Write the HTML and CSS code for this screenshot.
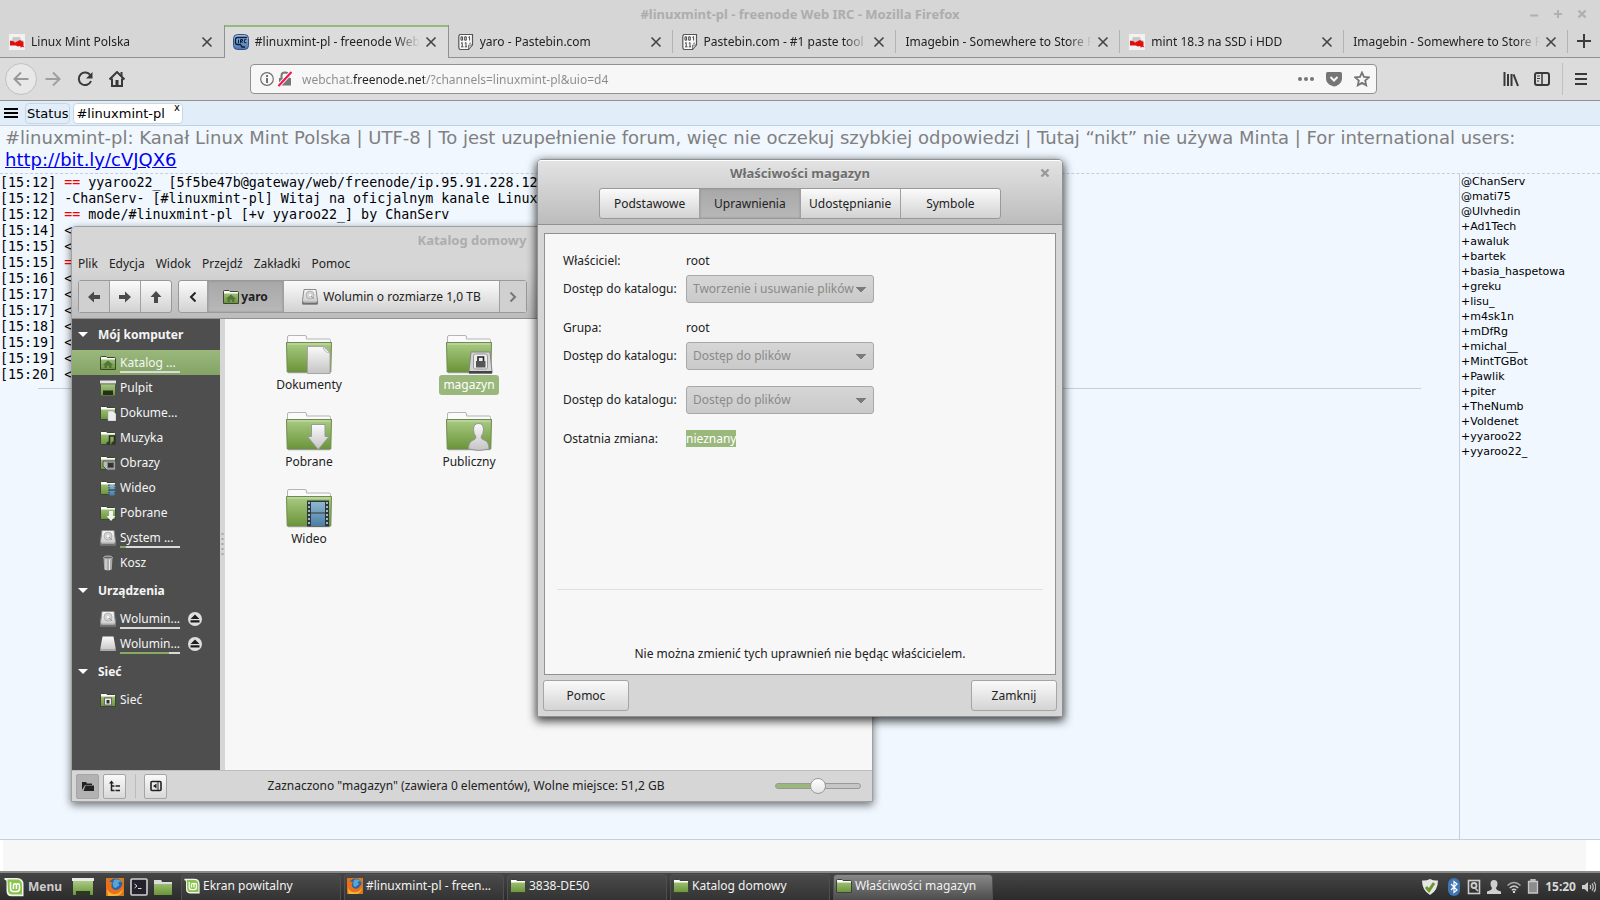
FILE: index.html
```html
<!DOCTYPE html>
<html lang="pl">
<head>
<meta charset="utf-8">
<title>#linuxmint-pl - freenode Web IRC</title>
<link rel="stylesheet" href="styles.css">
</head>
<body>
<svg class="defs" aria-hidden="true">
  <defs>
    <linearGradient id="green" x1="0" y1="0" x2="0" y2="1"><stop offset="0" stop-color="#a9cb83"/><stop offset="1" stop-color="#6b9439"/></linearGradient>
    <linearGradient id="silver" x1="0" y1="0" x2="0" y2="1"><stop offset="0" stop-color="#fafafa"/><stop offset="1" stop-color="#c4c4c4"/></linearGradient>
    <linearGradient id="film" x1="0" y1="0" x2="0" y2="1"><stop offset="0" stop-color="#8fb8cf"/><stop offset="1" stop-color="#4a7da5"/></linearGradient>
    <linearGradient id="blue" x1="0" y1="0" x2="0" y2="1"><stop offset="0" stop-color="#9cbde6"/><stop offset="1" stop-color="#4a76b4"/></linearGradient>
    <symbol id="folder" viewBox="0 0 48 40">
      <path d="M2.500 9V3q0-1.500 1.500-1.500H20q1.500 0 1.500 1.500v2H44q1.500 0 1.500 1.500V9z" fill="#fafafa" stroke="#b4b4b4"/>
      <path d="M1.500 8.500h45l-.7 29.500h-43.600z" fill="url(#green)" stroke="#6f8a50"/>
      <path d="M2.500 10h43" stroke="#c9dfb0"/><path d="M3 38.800h42" stroke="#000" opacity=".25"/>
    </symbol>
    <symbol id="sfolder" viewBox="0 0 16 16">
      <path d="M.5 14.500V2.500q0-1 1-1H6l1 1h7.500q1 0 1 1v11z" fill="url(#green)" stroke="#3d4436"/>
      <path d="M1 4.500V2.600Q1 2 1.600 2H6l1 1h7.400q.6 0 .6.600v.9z" fill="#fff"/>
    </symbol>
    <symbol id="drive" viewBox="0 0 16 16">
      <path d="M2 .5h12l1.500 11v3.500h-15v-3.500z" fill="url(#silver)" stroke="#8b8b8b"/><circle cx="8" cy="6" r="4" fill="#d2d2d2" stroke="#aaa" stroke-width=".8"/><circle cx="8" cy="6" r="1.200" fill="#f7f7f7"/><path d="M9 7l3 3" stroke="#999"/><path d="M.5 12.500h15v3H.5z" fill="#707070"/><path d="M1.500 13h13" stroke="#ddd"/>
    </symbol>
    <symbol id="x" viewBox="0 0 12 12"><path d="M1.500 1.500l9 9m0-9l-9 9" stroke="currentColor" stroke-width="1.600" fill="none"/></symbol>
    <symbol id="pl" viewBox="0 0 16 16"><rect width="16" height="16" fill="#f2f2f2"/><path d="M1 8V6h2l1-3h7l1 3h2v2z" fill="#c9c9c9"/><path d="M1 7h3l2 1.500L9 7l2-1 2 1.500h1.500V12l1 1.500-2-.8-2 1V12l-3 .5-1.500-1H1z" fill="#e20d0d"/></symbol>
    <symbol id="pastebin" viewBox="0 0 16 16"><path d="M2 .5h12.500v10L10.500 15.500H2Q.8 15 .8 13V3Q.8 1 2 .5z" fill="#fafafa" stroke="#555" stroke-width="1.200"/><path d="M10.500 15.500V11h4z" fill="#ccc" stroke="#555" stroke-width=".7"/><path d="M3 2.800h1.600v3.400H3zM6.700 2.800h1.600v3.400H6.700zM10.400 3.500l1.200-.9v3.900M3 9.400l1.200-.9v3.900M3 12.800h2.500M6.800 9.400L8 8.500v3.900M6.800 12.800h2.300M12 8.500v1.500" fill="none" stroke="#333" stroke-width=".9"/></symbol>
    <symbol id="irc" viewBox="0 0 16 16"><rect x=".5" y=".5" width="15" height="15" rx="4" fill="url(#blue)" stroke="#35527e"/><path d="M14 3.500H4.500Q2.500 3.500 2.500 5.500v3q0 2 2 2h3l1.500 2.500h3" fill="none" stroke="#0e1c33" stroke-width="1.300"/><path d="M5.500 5.500v3.500M7.500 9V5.500h2V7h-1.500l1.500 2M13.500 5.700h-2.200v3h2.200" fill="none" stroke="#0e1c33"/></symbol>
    <symbol id="mint" viewBox="0 0 20 20"><path d="M.5 1h12.500q6.500 0 6.500 6.500V19.300H7.500q-5 0-5-5.500V4.500Q2.500 2.800.5 2.800z" fill="#f1f5ea"/><path d="M3.500 2.500H12.500q5.500 0 5.500 5.500v9.500H8.500q-4.500 0-4.500-4.500z" fill="#8bc34f"/><path d="M6.500 5v6.500q0 3 3 3h3q3 0 3-3V8.500q0-1.700-1.500-1.700t-1.600 1.700v3.500M12.400 8.500q0-1.700-1.500-1.700T9.400 8.500v3.500" fill="none" stroke="#fff" stroke-width="1.500"/></symbol>
    <symbol id="firefox" viewBox="0 0 18 18"><rect width="18" height="18" fill="#d87a1c"/><circle cx="9.500" cy="8" r="7.500" fill="#2b62a8"/><path d="M8 2q4-2 8 2-3-1-4 1 2 1 1 3-2 0-3 2-3 0-3-3 0-3 1-5z" fill="#55a6d6"/><path d="M0 3l2-2q0 2 1 3 2-.5 4 1-2 1-1.500 2.500Q5 9.500 7 11q3 2 6 0 3-2 4-7 2 9-4 13H4q-4-3-4-8z" fill="#e8701a"/><path d="M1 11q3 6 9 5 5-1 7-6-1 8-8 8H2z" fill="#f6b53a"/></symbol>
    <symbol id="eject" viewBox="0 0 16 16"><circle cx="8" cy="8" r="7" fill="#dedede"/><path d="M8 3.500L12.500 8h-9zM3.500 9.300h9V11.500h-9z" fill="#1c1c1c"/></symbol>
    <symbol id="home" viewBox="0 0 16 16"><path d="M8 5.500L2.800 10h1.700v3h2.500v-2.200h2V13h2.500v-3h1.700z" fill="#53743a"/></symbol>
  </defs>
</svg>

<main class="browser">
  <header class="titlebar">
    <h1>#linuxmint-pl - freenode Web IRC - Mozilla Firefox</h1>
    <div class="wm">
      <button aria-label="Minimalizuj"><svg width="10" height="10"><path d="M1 6.500h8" stroke="#b0b0b0" stroke-width="2"/></svg></button>
      <button aria-label="Maksymalizuj"><svg width="10" height="10"><path d="M1 5h8M5 1v8" stroke="#b0b0b0" stroke-width="2"/></svg></button>
      <button aria-label="Zamknij okno"><svg width="10" height="10"><path d="M1.500 1.500l7 7m0-7l-7 7" stroke="#b0b0b0" stroke-width="2.400"/></svg></button>
    </div>
  </header>
  <nav class="tabs">
    <div class="tab"><svg class="i16"><use href="#pl"/></svg><button class="name">Linux Mint Polska</button><button class="close" aria-label="Zamknij kartę"><svg><use href="#x"/></svg></button></div>
    <div class="tab active"><svg class="i16"><use href="#irc"/></svg><button class="name">#linuxmint-pl - freenode Web</button><button class="close" aria-label="Zamknij kartę"><svg><use href="#x"/></svg></button></div>
    <div class="tab"><svg class="i16"><use href="#pastebin"/></svg><button class="name">yaro - Pastebin.com</button><button class="close" aria-label="Zamknij kartę"><svg><use href="#x"/></svg></button></div>
    <div class="tab"><svg class="i16"><use href="#pastebin"/></svg><button class="name">Pastebin.com - #1 paste tool s</button><button class="close" aria-label="Zamknij kartę"><svg><use href="#x"/></svg></button></div>
    <div class="tab"><button class="name">Imagebin - Somewhere to Store R</button><button class="close" aria-label="Zamknij kartę"><svg><use href="#x"/></svg></button></div>
    <div class="tab"><svg class="i16"><use href="#pl"/></svg><button class="name">mint 18.3 na SSD i HDD</button><button class="close" aria-label="Zamknij kartę"><svg><use href="#x"/></svg></button></div>
    <div class="tab"><button class="name">Imagebin - Somewhere to Store R</button><button class="close" aria-label="Zamknij kartę"><svg><use href="#x"/></svg></button></div>
    <button class="newtab" aria-label="Nowa karta"><svg width="14" height="14"><path d="M0 7h14M7 0v14" stroke="#3b3b3b" stroke-width="2"/></svg></button>
  </nav>
  <div class="navbar">
    <div class="navleft">
      <button class="back" aria-label="Wstecz"><svg width="16" height="16"><path d="M15.500 8H1.500M8 1.500L1.500 8 8 14.500" fill="none" stroke="#999" stroke-width="2"/></svg></button>
      <button aria-label="Dalej"><svg width="16" height="16"><path d="M.5 8h14M8 1.500L14.500 8 8 14.500" fill="none" stroke="#9f9f9f" stroke-width="2"/></svg></button>
      <button aria-label="Odśwież"><svg width="16" height="16"><path d="M13.500 4.500A6.300 6.300 0 1 0 14 10" fill="none" stroke="#393939" stroke-width="2"/><path d="M15.500 1v6.500H9z" fill="#393939"/></svg></button>
      <button aria-label="Strona startowa"><svg width="16" height="16"><path d="M.5 8.500L8 1l7.500 7.500M3 7.500V15h10V7.500" fill="none" stroke="#393939" stroke-width="2"/><path d="M6.500 15V9h3v6M11.500 1h2v4h-2z" fill="#393939"/></svg></button>
    </div>
    <div class="urlbar">
      <svg width="14" height="14"><circle cx="7" cy="7" r="6.300" fill="none" stroke="#6f6f6f" stroke-width="1.200"/><path d="M7 6v5M7 3v2" stroke="#6f6f6f" stroke-width="2"/></svg>
      <svg width="14" height="16"><path d="M1 7h12v7.500H1z" fill="#777"/><path d="M3.500 7V4.500q0-3 3.500-3t3.500 3V7" fill="none" stroke="#777" stroke-width="2"/><path d="M0 15.500L13.500 1" stroke="#f7f7f7" stroke-width="4"/><path d="M.5 15L13.500 1" stroke="#f0134d" stroke-width="2"/></svg>
      <input type="text" aria-label="Adres" value="webchat.freenode.net/?channels=linuxmint-pl&amp;uio=d4">
      <button aria-label="Więcej"><svg width="16" height="16"><g fill="#757575"><circle cx="2" cy="8" r="2"/><circle cx="8" cy="8" r="2"/><circle cx="14" cy="8" r="2"/></g></svg></button>
      <button aria-label="Pocket"><svg width="16" height="16"><path d="M1.500 1h13q1.500 0 1.500 1.500V7q0 4-3 6.300T8 15.500 3 13.300 0 7V2.500Q0 1 1.500 1z" fill="#757575"/><path d="M4.500 6L8 9.500 11.500 6" fill="none" stroke="#f7f7f7" stroke-width="2"/></svg></button>
      <button aria-label="Dodaj zakładkę"><svg width="16" height="16"><path d="M8 1.500l2 4.400 4.800.5-3.600 3.200 1 4.700L8 11.900l-4.200 2.400 1-4.700L1.200 6.400 6 5.900z" fill="none" stroke="#757575" stroke-width="1.800"/></svg></button>
    </div>
    <div class="navright">
      <button aria-label="Biblioteka"><svg width="16" height="16"><path d="M1.500 1v14M5 3v12M8.500 3v12M10.500 3.300L15 15" stroke="#393939" stroke-width="2"/></svg></button>
      <button aria-label="Panel boczny"><svg width="16" height="16"><rect x="1" y="2" width="14" height="12" rx="2" fill="none" stroke="#393939" stroke-width="2"/><path d="M8 2v12" stroke="#393939" stroke-width="1.500"/><path d="M3 5h3M3 7.500h3M3 10h2" stroke="#393939"/></svg></button>
      <span class="navsep"></span>
      <button aria-label="Menu przeglądarki"><svg width="12" height="14"><path d="M0 2h12M0 7h12M0 12h12" stroke="#393939" stroke-width="2"/></svg></button>
    </div>
  </div>
  <div class="irctabs">
    <button aria-label="Menu czatu"><svg width="14" height="10"><path d="M0 1h14M0 5h14M0 9h14" stroke="#000" stroke-width="2"/></svg></button>
    <button class="irctab">Status</button>
    <button class="irctab current">#linuxmint-pl<sup>x</sup></button>
  </div>
  <p class="topic">#linuxmint-pl: Kanał Linux Mint Polska | UTF-8 | To jest uzupełnienie forum, więc nie oczekuj szybkiej odpowiedzi | Tutaj “nikt” nie używa Minta | For international users: <a href="#">http://bit.ly/cVJQX6</a></p>
  <div class="chat">
    <div class="log">
      <p>[15:12] <b>==</b> yyaroo22_ [5f5be47b@gateway/web/freenode/ip.95.91.228.12</p>
      <p>[15:12] -ChanServ- [#linuxmint-pl] Witaj na oficjalnym kanale Linux</p>
      <p>[15:12] <b>==</b> mode/#linuxmint-pl [+v yyaroo22_] by ChanServ</p>
      <p>[15:14] &lt;</p>
      <p>[15:15] &lt;</p>
      <p>[15:15] <b>=</b></p>
      <p>[15:16] &lt;</p>
      <p>[15:17] &lt;</p>
      <p>[15:17] &lt;</p>
      <p>[15:18] &lt;</p>
      <p>[15:19] &lt;</p>
      <p>[15:19] &lt;</p>
      <p>[15:20] &lt;</p>
      <hr>
    </div>
    <ul class="users">
      <li>@ChanServ</li><li>@mati75</li><li>@Ulvhedin</li><li>+Ad1Tech</li><li>+awaluk</li><li>+bartek</li><li>+basia_haspetowa</li><li>+greku</li><li>+lisu_</li><li>+m4sk1n</li><li>+mDfRg</li><li>+michal__</li><li>+MintTGBot</li><li>+Pawlik</li><li>+piter</li><li>+TheNumb</li><li>+Voldenet</li><li>+yyaroo22</li><li>+yyaroo22_</li>
    </ul>
  </div>
  <div class="compose"><input type="text" aria-label="Wiadomość"></div>
</main>

<section class="window files" aria-label="Katalog domowy">
  <header class="fhead">
    <h2>Katalog domowy</h2>
    <nav class="menu"><button>Plik</button><button>Edycja</button><button>Widok</button><button>Przejdź</button><button>Zakładki</button><button>Pomoc</button></nav>
    <div class="toolbar">
      <div class="group arrows">
        <button class="off" aria-label="Wstecz"><svg width="12" height="12"><path d="M0 6l6-5.500V4h6v4H6v3.500z" fill="#4a4a4a"/></svg></button>
        <button aria-label="Dalej"><svg width="12" height="12"><path d="M12 6L6 .5V4H0v4h6v3.500z" fill="#4a4a4a"/></svg></button>
        <button aria-label="W górę"><svg width="12" height="12"><path d="M6 0L.5 6H4v6h4V6h3.500z" fill="#4a4a4a"/></svg></button>
      </div>
      <div class="group path">
        <button class="edge" aria-label="Poprzednie"><svg width="8" height="10"><path d="M6.500.5L2 5l4.500 4.500" fill="none" stroke="#222" stroke-width="2"/></svg></button>
        <button class="on"><svg class="i16"><use href="#sfolder"/><use href="#home"/></svg>yaro</button>
        <button class="vol"><svg class="i16"><use href="#drive"/></svg>Wolumin o rozmiarze 1,0 TB</button>
        <button class="edge off" aria-label="Następne"><svg width="8" height="10"><path d="M1.500.5L6 5 1.500 9.500" fill="none" stroke="#777" stroke-width="2"/></svg></button>
      </div>
    </div>
  </header>
  <div class="fbody">
    <aside class="side">
      <h3>Mój komputer</h3>
      <a class="sel" href="#"><svg class="i16"><use href="#sfolder"/><use href="#home"/></svg><span>Katalog ...<i></i></span></a>
      <a href="#"><svg class="i16"><path d="M1 3.500h14v12H1z" fill="url(#green)"/><path d="M0 .5h16v3H0z" fill="#e4e4e4"/><path d="M0 4h16" stroke="#777"/><path d="M3 10.500h10v4.500H3z" fill="#263018"/></svg><span>Pulpit</span></a>
      <a href="#"><svg class="i16"><use href="#sfolder"/><path d="M8 6h5l3 3v7H8z" fill="#eee" stroke="#aaa" stroke-width=".6"/></svg><span>Dokume...</span></a>
      <a href="#"><svg class="i16"><use href="#sfolder"/><path d="M9.500 13V6h5v7" fill="none" stroke="#2b2b2b" stroke-width="1.600"/><circle cx="8.300" cy="13.300" r="1.800" fill="#333"/><circle cx="13.300" cy="13.300" r="1.800" fill="#333"/></svg><span>Muzyka</span></a>
      <a href="#"><svg class="i16"><use href="#sfolder"/><path d="M3 6h12.500v9H7L3 11z" fill="#bbb" stroke="#555"/><rect x="7.500" y="7.500" width="6.500" height="5.500" fill="#333" stroke="#888"/></svg><span>Obrazy</span></a>
      <a href="#"><svg class="i16"><use href="#sfolder"/><path d="M8.500 4.500h7v11h-7z" fill="url(#film)"/><path d="M9 4.500v11M15 4.500v11" stroke="#29333b" stroke-dasharray="1.500 1"/><path d="M9 10h6" stroke="#29333b"/></svg><span>Wideo</span></a>
      <a href="#"><svg class="i16"><use href="#sfolder"/><path d="M9 6h4v5h2.500L11 16l-4.500-5H9z" fill="#f2f2f2"/></svg><span>Pobrane</span></a>
      <a href="#"><svg class="i16"><use href="#drive"/></svg><span>System ...<i class="u10"></i></span></a>
      <a href="#"><svg class="i16"><path d="M3.500 2.500h9l-.7 12q-3.800 2-7.600 0z" fill="#aaa"/><path d="M6 4v11M9.500 4v11" stroke="#e8e8e8"/><ellipse cx="8" cy="2.500" rx="4.500" ry="1.500" fill="#666" stroke="#bbb"/></svg><span>Kosz</span></a>
      <h3>Urządzenia</h3>
      <a href="#"><svg class="i16"><use href="#drive"/></svg><span>Wolumin...<i></i></span><svg class="i16 ej"><use href="#eject"/></svg></a>
      <a href="#"><svg class="i16"><path d="M2.500.5h11l2 11v3.500H.5v-3.500z" fill="url(#silver)"/><path d="M.5 14h15" stroke="#aaa" stroke-width="2"/></svg><span>Wolumin...<i class="u80"></i></span><svg class="i16 ej"><use href="#eject"/></svg></a>
      <h3>Sieć</h3>
      <a href="#"><svg class="i16"><use href="#sfolder"/><rect x="4.500" y="6" width="7" height="7" fill="#eee" stroke="#666"/><path d="M6.500 8h3v3.500h-3z" fill="#333"/></svg><span>Sieć</span></a>
    </aside>
    <div class="grip"><svg width="3" height="26"><path d="M1.500 1v25" stroke="#a6a6a6" stroke-width="2" stroke-dasharray="2 3"/></svg></div>
    <div class="icons">
      <figure><svg viewBox="0 0 48 40"><use href="#folder"/><path d="M22.500 12.500h16.500l6 6V39.500H22.500z" fill="url(#silver)" stroke="#a5a5a5"/><path d="M38 12.500q1 6 7 6.500z" fill="#fff" stroke="#b5b5b5"/></svg><figcaption>Dokumenty</figcaption></figure>
      <figure class="picked"><svg viewBox="0 0 48 40"><use href="#folder"/><path d="M26 18h19l2 19v2H24v-2z" fill="#d4d4d4" stroke="#858585"/><path d="M24 37h23v2.500H24z" fill="#444"/><rect x="28.500" y="20" width="14" height="15" rx="2" fill="#eee" stroke="#999"/><path d="M31 27h9.500v6.500H31z" fill="#555"/><path d="M33 27v-4h5.500v4" fill="none" stroke="#222" stroke-width="1.600"/></svg><figcaption>magazyn</figcaption></figure>
      <figure><svg viewBox="0 0 48 40"><use href="#folder"/><path d="M26.500 13.500h13.500v12h4L33.200 38.500 22.500 25.500h4z" fill="url(#silver)" stroke="#999"/></svg><figcaption>Pobrane</figcaption></figure>
      <figure><svg viewBox="0 0 48 40"><use href="#folder"/><path d="M33.500 12.500q5 0 5 6 0 4-2.500 7.500 0 2 3 3 5 1.500 5 9-10 3-20.500 0 0-7.500 5-9 2.500-1 2.500-3-2.500-3.500-2.500-7.500 0-6 5-6z" fill="url(#silver)" stroke="#969696"/></svg><figcaption>Publiczny</figcaption></figure>
      <figure><svg viewBox="0 0 48 40"><use href="#folder"/><path d="M22 12.500h22v26H22z" fill="#30363b"/><path d="M26 14h14v24H26z" fill="url(#film)"/><path d="M26 25h14" stroke="#30363b"/><path d="M24 14v24M42 14v24" stroke="#9dbccb" stroke-width="2" stroke-dasharray="2 2"/></svg><figcaption>Wideo</figcaption></figure>
    </div>
  </div>
  <footer class="ffoot">
    <button class="on" aria-label="Miejsca"><svg width="12" height="12"><path d="M0 10V2h4l1 1.500h5V5H3z" fill="#222"/><path d="M3.500 5.500H12V11H1.500z" fill="#222"/></svg></button>
    <button aria-label="Drzewo"><svg width="12" height="12"><path d="M2.500 2v8.500h3M2.500 6h3M6.500 6H11M6.500 10.500H11" fill="none" stroke="#222" stroke-width="1.500"/><path d="M0 3.500L2.500.5 5 3.500z" fill="#222"/></svg></button>
    <span class="fsep"></span>
    <button aria-label="Ukryj panel"><svg width="12" height="12"><rect x="1" y="1.500" width="10" height="9" rx="1" fill="none" stroke="#222" stroke-width="1.600"/><path d="M6.500 3.500v5L3 6z" fill="#222"/><path d="M8 2v8" stroke="#222"/></svg></button>
    <p>Zaznaczono "magazyn" (zawiera 0 elementów), Wolne miejsce: 51,2 GB</p>
    <input type="range" aria-label="Powiększenie" min="0" max="100" value="50">
  </footer>
</section>

<section class="window dialog" aria-label="Właściwości magazyn">
  <header class="dhead">
    <div class="dtitle"><h2>Właściwości magazyn</h2><button class="dx" aria-label="Zamknij okno"><svg width="10" height="10"><path d="M1.500 1.500l7 7m0-7l-7 7" stroke="#999" stroke-width="2.400"/></svg></button></div>
    <div class="group dtabs"><button>Podstawowe</button><button class="on">Uprawnienia</button><button>Udostępnianie</button><button>Symbole</button></div>
  </header>
  <div class="pane">
    <div class="form">
      <span>Właściciel:</span><span>root</span>
      <label for="s1">Dostęp do katalogu:</label><select id="s1" disabled><option>Tworzenie i usuwanie plików</option></select>
      <span class="g">Grupa:</span><span class="g">root</span>
      <label for="s2">Dostęp do katalogu:</label><select id="s2" disabled><option>Dostęp do plików</option></select>
      <label class="h" for="s3">Dostęp do katalogu:</label><select class="h" id="s3" disabled><option>Dostęp do plików</option></select>
      <span class="g">Ostatnia zmiana:</span><span class="g"><mark>nieznany</mark></span>
    </div>
    <p class="note">Nie można zmienić tych uprawnień nie będąc właścicielem.</p>
  </div>
  <footer class="dfoot"><button>Pomoc</button><button>Zamknij</button></footer>
</section>

<footer class="taskbar">
  <button class="mintmenu"><svg width="20" height="20"><use href="#mint"/></svg>Menu</button>
  <button class="desk" aria-label="Pokaż pulpit"><svg width="22" height="20" viewBox="0 0 22 20"><path d="M1 4h20v14H1z" fill="url(#green)"/><path d="M0 1h22v3H0z" fill="#e9e9e9"/><path d="M4 14h14v4H4z" fill="#2c3820"/></svg></button>
  <button class="quick" aria-label="Firefox"><svg width="18" height="18"><use href="#firefox"/></svg></button>
  <button class="quick" aria-label="Terminal"><svg width="18" height="18"><rect x="1" y="1" width="16" height="16" rx="1" fill="#25212b" stroke="#cfcfcf" stroke-width="1.600"/><path d="M4.500 6l2.500 2-2.500 2M8 10.500h3.500" fill="none" stroke="#ddd"/></svg></button>
  <button class="quick" aria-label="Pliki"><svg width="18" height="18"><path d="M0 17V2h7l1 2h10v13z" fill="url(#green)"/><path d="M0 6V2h7l1 2h10v2z" fill="#dcdcdc"/></svg></button>
  <nav class="tasks">
    <button><svg class="i16"><use href="#mint"/></svg>Ekran powitalny</button>
    <button><svg class="i16"><use href="#firefox"/></svg>#linuxmint-pl - freen...</button>
    <button><svg class="i16"><use href="#sfolder"/></svg>3838-DE50</button>
    <button><svg class="i16"><use href="#sfolder"/></svg>Katalog domowy</button>
    <button class="on"><svg class="i16"><use href="#sfolder"/></svg>Właściwości magazyn</button>
  </nav>
  <div class="tray">
    <svg class="shield" width="16" height="16"><path d="M8 0q4 2 8 1.500 0 10-8 14.500Q0 11.500 0 1.500 4 2 8 0z" fill="#e6e6e6"/><path d="M4 8l3 3.500L12 4" fill="none" stroke="#6a9a2c" stroke-width="3"/></svg>
    <svg width="14" height="18"><rect x="1" y="0" width="12" height="18" rx="6" fill="#3f74b5"/><path d="M4 6l6 6-3 2.500v-11L10 6l-6 6" fill="none" stroke="#fff" stroke-width="1.200"/></svg>
    <svg width="14" height="16"><rect x="1.500" y="1.500" width="11" height="13" fill="none" stroke="#ccc" stroke-width="1.600"/><circle cx="7" cy="6.500" r="2.500" fill="none" stroke="#ccc" stroke-width="1.800"/><path d="M7 8l4 4" stroke="#ccc" stroke-width="1.600"/></svg>
    <svg width="14" height="14"><path d="M7 0q3.500 0 3.500 4 0 2.500-1.500 4 0 2 5 3.500V14H0v-2.500Q5 10 5 8 3.500 6.500 3.500 4 3.500 0 7 0z" fill="#d0d0d0"/></svg>
    <svg width="14" height="12"><path d="M.5 4.500q6.500-6 13 0" fill="none" stroke="#aaa" stroke-width="1.500"/><path d="M2.800 7q4.200-4 8.400 0M4.800 9.300q2.200-2 4.400 0" fill="none" stroke="#ccc" stroke-width="1.500"/><circle cx="7" cy="11" r="1.200" fill="#ddd"/></svg>
    <svg width="12" height="15"><path d="M4 0h4v2H4zM1.500 2.500h9V14h-9z" fill="#8c8c8c" stroke="#c8c8c8" stroke-width="1.300"/></svg>
    <time>15:20</time>
    <svg width="14" height="14"><path d="M0 5h2.500L6 2v10L2.500 9H0z" fill="#ccc"/><path d="M8 5q1.300 2 0 4M10 3.500q2.500 3.500 0 7M12 2q3.500 5 0 10" fill="none" stroke="#bbb" stroke-width="1.300"/></svg>
  </div>
</footer>
</body>
</html>
```
FILE: styles.css
```css
* { box-sizing: border-box; margin: 0; padding: 0; }
html, body { height: 100%; }
body {
  display: flex;
  flex-direction: column;
  overflow: hidden;
  background: #d6d6d6;
  color: #222;
  font: 12px/16px "Noto Sans", sans-serif;
}
button { font: inherit; color: inherit; background: none; border: 0; display: flex; align-items: center; justify-content: center; white-space: nowrap; }
svg { flex: none; display: block; }
.defs { position: absolute; width: 0; height: 0; }
.i16 { width: 16px; height: 16px; }

/* Browser chrome */
.browser { flex: 1; min-height: 0; display: flex; flex-direction: column; }
.titlebar { display: grid; grid-template-columns: 1fr auto 1fr; align-items: center; height: 25px; padding-top: 2px; }
.titlebar h1 { grid-column: 2; font-size: 13px; color: #adadad; }
.wm { display: flex; justify-content: flex-end; gap: 14px; padding-right: 13px; }
.tabs { display: flex; height: 33px; border-bottom: 1px solid #919191; }
.tab { flex: 1; min-width: 0; display: flex; align-items: center; padding: 1px 11px 0 9px; position: relative; }
.tab::after { content: ""; position: absolute; right: 0; top: 5px; bottom: 4px; width: 1px; background: #b3b3b3; }
.tab:first-child::after, .tab.active::after { display: none; }
.tab .name { flex: 1; min-width: 0; margin-left: 6px; justify-content: flex-start; -webkit-mask-image: linear-gradient(90deg, #000 calc(100% - 24px), transparent); mask-image: linear-gradient(90deg, #000 calc(100% - 24px), transparent); }
.tab .name:first-child { margin-left: 0; }
.tab .close { color: #444; margin-left: 5px; }
.tab .close svg { width: 12px; height: 12px; }
.tab.active { background: #dcdcdc; border: solid #919191; border-width: 0 1px; padding-left: 8px; box-shadow: inset 0 2px #9ab87c; margin-bottom: -1px; }
.newtab { width: 32px; }
.navbar { display: flex; align-items: center; height: 43px; background: #dcdcdc; border-bottom: 1px solid #919191; }
.navleft { display: flex; align-items: center; gap: 16px; width: 250px; padding-left: 5px; }
.back { width: 32px; height: 32px; border: 1px solid #c0c0c0; border-radius: 50%; background: #e8e8e8; margin-right: -8px; }
.urlbar { flex: 1; display: flex; align-items: center; gap: 4px; height: 30px; padding: 0 2px 0 9px; background: #f7f7f7; border: 1px solid #919191; border-radius: 4px; }
.urlbar input {
  flex: 1;
  min-width: 0;
  height: 20px;
  margin-left: 6px;
  border: 0;
  outline: 0;
  font: inherit;
  color: transparent;
  background: linear-gradient(90deg, #8a8a8a 50px, #222 50px, #222 122px, #8a8a8a 122px);
  -webkit-background-clip: text;
  background-clip: text;
}
.urlbar button { width: 24px; }
.navright { display: flex; align-items: center; justify-content: flex-end; gap: 16px; width: 223px; padding-right: 13px; }
.navright button:first-child { margin-right: -1px; }
.navsep { width: 1px; height: 32px; background: #c0c0c0; margin: 0 -4px; }

/* Web chat */
.irctabs { display: flex; align-items: center; gap: 3px; height: 25px; padding-left: 4px; background: #e1eefa; border-bottom: 1px solid #c0d0e0; }
.irctabs button:first-child { margin-right: 4px; }
.irctab { height: 21px; padding: 0 1px; border: 1px solid #c8d6e4; border-radius: 4px; color: #000; font: 13px/19px "DejaVu Sans", sans-serif; }
.irctab.current { background: #fff; padding: 0 2px; }
.irctab sup { font-size: 10px; line-height: 8px; align-self: flex-start; margin-left: 9px; }
.topic { background: #f0f7ff; color: #808080; font: 18px/22px "DejaVu Sans", sans-serif; padding: 1px 5px 2px; border-bottom: 1px dashed #c3cfde; }
.topic a { color: #00e; }
.chat { flex: 1; min-height: 0; display: flex; background: #f0f7ff; }
.log { flex: 1; padding: 1px 0; color: #000; font: 10pt/16px "DejaVu Sans Mono", monospace; }
.log p { white-space: pre; }
.log b { color: #f00; font-weight: 400; }
.log hr { border: 0; border-top: 1px solid #c3cfde; margin: 5px 38px 0; }
.users { width: 141px; border-left: 1px solid #c3cfde; padding-left: 1px; list-style: none; color: #000; font: 11px/15px "DejaVu Sans", sans-serif; }
.compose { height: 32px; padding: 0 14px 0 3px; background: #fff; border-top: 1px solid #c3cfde; }
.compose input { width: 100%; height: 100%; border: 0; background: #f7f7f7; outline: 0; display: block; }

/* Windows */
.window { position: absolute; display: flex; flex-direction: column; background: #d6d6d6; border: 1px solid #919191; border-radius: 5px 5px 0 0; }
.group { display: flex; border: 1px solid #999; border-radius: 3px; background: linear-gradient(#fbfbfb, #d2d2d2); }
.group button + button { border-left: 1px solid #a0a0a0; }
.group .on { background: linear-gradient(#a8a8a8, #b8b8b8); box-shadow: inset 0 0 2px #888; }
.group .off { background: #d0d0d0; }
.files { left: 71px; top: 226px; width: 802px; height: 576px; box-shadow: 0 3px 9px rgba(0, 0, 0, .55); border-color: #a0a0a0; }
.files h2 { font-size: 13px; line-height: 26px; text-align: center; color: #adadad; }
.fhead { height: 92px; background: linear-gradient(#d6d6d6 45%, #bcbcbc); border-bottom: 1px solid #919191; border-radius: 4px 4px 0 0; }
.menu { display: flex; gap: 11px; padding: 2px 6px 0; height: 27px; line-height: 17px; }
.menu button { height: 17px; }
.toolbar { display: flex; gap: 6px; padding-left: 6px; }
.toolbar .group { height: 33px; }
.arrows button { width: 31px; }
.arrows button:first-child { width: 30px; }
.edge { width: 28px; }
.path .on { width: 76px; gap: 2px; font-weight: 700; }
.vol { width: 216px; gap: 5px; }
.path .edge.off { width: 27px; }
.fbody { flex: 1; min-height: 0; display: flex; }
.side { width: 148px; background: #4e4e4e; color: #f5f5f5; }
.side h3 { display: flex; align-items: center; height: 31px; font-size: 12px; padding-left: 26px; position: relative; }
.side h3::before { content: ""; position: absolute; left: 6px; top: 13px; border: 5px solid transparent; border-top-color: #fff; border-bottom: 0; }
.side a { display: flex; align-items: center; gap: 4px; height: 25px; padding-left: 28px; color: inherit; text-decoration: none; }
.side .sel { background: linear-gradient(#9ab87c, #84a466); }
.side span { position: relative; }
.side span i { position: absolute; left: 0; bottom: -2px; width: 60px; height: 2px; background: #dadada; }
.side i.u10 { background: linear-gradient(90deg, #86a964 6px, #dadada 6px); }
.side i.u80 { background: linear-gradient(90deg, #86a964 49px, #dadada 49px); }
.side .ej { margin-left: auto; margin-right: 17px; }
.grip { width: 5px; display: flex; align-items: center; justify-content: center; }
.icons { flex: 1; background: #f7f7f7; display: grid; grid-template-columns: 160px 160px; grid-auto-rows: 77px; padding: 15px 0 0 4px; }
.icons figure { display: flex; flex-direction: column; align-items: center; gap: 1px; }
.icons svg { width: 48px; height: 40px; }
.icons figcaption { padding: 0 4px; line-height: 20px; border-radius: 3px; }
.picked figcaption { background: #9ab87c; color: #fff; }
.ffoot { display: flex; align-items: center; gap: 4px; height: 31px; padding: 0 11px 0 4px; border-top: 1px solid #bdbdbd; }
.ffoot button { width: 23px; height: 25px; border: 1px solid #a5a5a5; border-radius: 2px; background: linear-gradient(#fafafa, #d8d8d8); }
.ffoot .on { background: #b2b2b2; }
.fsep { width: 1px; height: 24px; background: #bbb; margin: 0 4px 0 5px; }
.ffoot p { flex: 1; text-align: center; padding-right: 10px; }
.ffoot input { appearance: none; width: 86px; height: 6px; border: 1px solid #999; border-radius: 3px; background: linear-gradient(90deg, #9ab87c 50%, #c6c6c6 50%); }
.ffoot input::-webkit-slider-thumb { appearance: none; width: 16px; height: 16px; border: 1px solid #999; border-radius: 50%; background: linear-gradient(#fff, #e4e4e4); }

.dialog { left: 537px; top: 159px; width: 526px; height: 558px; box-shadow: 0 3px 10px 1px rgba(0, 0, 0, .75); }
.dhead { height: 65px; border-bottom: 1px solid #919191; border-radius: 4px 4px 0 0; background: linear-gradient(#e3e3e3, #bcbcbc); box-shadow: inset 0 1px #fff; }
.dtitle { display: grid; grid-template-columns: 1fr auto 1fr; align-items: center; height: 28px; padding-bottom: 2px; }
.dtitle h2 { grid-column: 2; font-size: 13px; color: #6e6e6e; text-shadow: 0 1px #eee; }
.dx { justify-self: end; margin-right: 12px; }
.dtabs { height: 31px; width: 402px; margin: 0 auto; }
.dtabs button { flex: 1; }
.pane { flex: 1; display: flex; flex-direction: column; justify-content: space-between; margin: 8px 6px 5px; padding: 19px 12px 12px; background: #f7f7f7; border: 1px solid #919191; }
.form { display: grid; grid-template-columns: 123px 188px; align-items: center; padding-left: 6px; row-gap: 6px; }
.form .g { margin-top: 11px; }
.form .h { margin-top: 10px; }
.form select {
  appearance: none;
  height: 28px;
  padding: 0 6px;
  border: 1px solid #a8a8a8;
  border-radius: 3px;
  font: inherit;
  color: #8a8a8a;
  opacity: 1;
  background: conic-gradient(from 315deg at 50% 100%, #7b7b7b 90deg, transparent 0) right 7px center / 10px 5px no-repeat, linear-gradient(#d6d6d6, #cacaca);
}
mark { background: #9ab87c; color: #fff; }
.note { text-align: center; border-top: 1px solid #e0e0e0; padding-top: 56px; }
.dfoot { display: flex; justify-content: space-between; padding: 0 5px 5px; }
.dfoot button { width: 86px; height: 31px; border: 1px solid #a5a5a5; border-radius: 3px; background: linear-gradient(#fafafa, #d4d4d4); }

/* Panel */
.taskbar { display: flex; align-items: center; height: 29px; padding: 0 4px; border-top: 2px solid #8a8a8a; background: linear-gradient(#454545, #2b2b2b); color: #f2f2f2; }
.mintmenu { gap: 4px; font-weight: 700; color: #ccc; width: 60px; margin-right: 8px; justify-content: flex-start; }
.desk { margin-right: 12px; }
.quick { margin-right: 6px; }
.tasks { flex: 1; display: flex; gap: 3px; margin-left: 3px; align-self: flex-end; }
.tasks button { width: 160px; height: 26px; justify-content: flex-start; gap: 3px; padding: 0 2px 4px; border: 1px solid #4f4f4f; border-bottom: 0; border-radius: 4px 4px 0 0; background: linear-gradient(#4a4a4a, #333); }
.tasks .on { background: linear-gradient(#888, #4c4c4c); }
.tray { display: flex; align-items: center; gap: 6px; font-weight: 700; color: #d8d8d8; }
.shield { margin-right: 3px; }
```
